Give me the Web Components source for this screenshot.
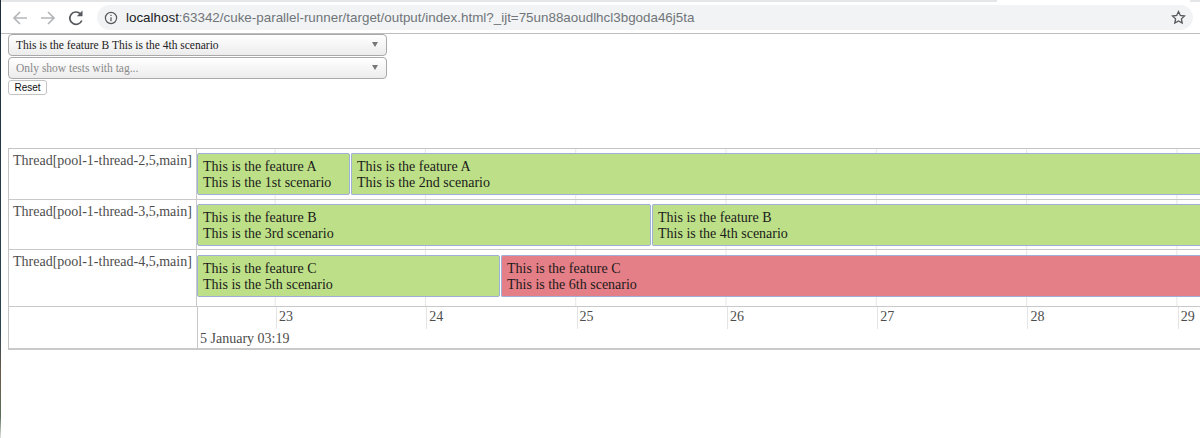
<!DOCTYPE html>
<html lang="en">
<head>
<meta charset="UTF-8">
<title>Cucumber timeline</title>
<style>
    html, body { margin: 0; padding: 0; background: #fff; }
    body { height: 438px; overflow: hidden; font-family: "Liberation Serif", serif; }
    /* desktop showing at the window's left edge */
    body::before { content: ""; position: fixed; left: 0; top: 0; bottom: 0; width: 1px; background: linear-gradient(#1e2c3a, #2b4555 75%, #6b5a4a 85%, #5a6f5a 95%, #dfe3df); }
</style>
</head>
<body>

<browser-bar url-host="localhost" url-rest=":63342/cuke-parallel-runner/target/output/index.html?_ijt=75un88aoudlhcl3bgoda46j5ta"></browser-bar>

<filter-panel>
    <filter-select>This is the feature B This is the 4th scenario</filter-select>
    <filter-select placeholder>Only show tests with tag...</filter-select>
    <reset-button>Reset</reset-button>
</filter-panel>

<time-line>
    <time-row label="Thread[pool-1-thread-2,5,main]" style="--row-h:50px;--item-top:4px">
        <time-item width="153" feature="This is the feature A" scenario="This is the 1st scenario"></time-item>
        <time-item feature="This is the feature A" scenario="This is the 2nd scenario"></time-item>
    </time-row>
    <time-row label="Thread[pool-1-thread-3,5,main]" style="--row-h:49px;--item-top:4px">
        <time-item width="454" feature="This is the feature B" scenario="This is the 3rd scenario"></time-item>
        <time-item feature="This is the feature B" scenario="This is the 4th scenario"></time-item>
    </time-row>
    <time-row label="Thread[pool-1-thread-4,5,main]" style="--row-h:56px;--item-top:5px">
        <time-item width="303" feature="This is the feature C" scenario="This is the 5th scenario"></time-item>
        <time-item failed feature="This is the feature C" scenario="This is the 6th scenario"></time-item>
    </time-row>
</time-line>

<script>

    class BrowserBar extends HTMLElement {
        constructor(){
            super()
            this.attachShadow({mode:"open"})
            this.shadowRoot.innerHTML = `
            <style>
                :host { display: flex; align-items: center; box-sizing: border-box; height: 34px; padding: 4px 7px 2px 0; background: linear-gradient(90deg, #e4e6e8 997px, #fff 997px, #fff 1190px, #e4e6e8 1190px) 0 0 / 100% 2px no-repeat #fff; border-bottom: 1px solid #bdbdbd; font-family: "Liberation Sans", sans-serif; }
                .nav { display: flex; align-items: center; gap: 8px; padding-left: 10px; width: 97px; flex: none; box-sizing: border-box; }
                .reload { margin-left: 1px; }
                svg { display: block; flex: none; }
                .omni { flex: 1; height: 25px; display: flex; align-items: center; background: #f1f3f4; border-radius: 13px; padding: 0 7px 0 7px; font-size: 13.4px; color: #70757a; white-space: nowrap; }
                .omni b { font-weight: normal; color: #202124; }
                .url { flex: 1; margin-left: 8px; }
            </style>
            <div class="nav">
                <svg width="20" height="20" viewBox="0 0 20 20" fill="none" stroke="#b4b6b9" stroke-width="1.7"><path d="M17 10H4M10 4l-6 6 6 6"/></svg>
                <svg width="20" height="20" viewBox="0 0 20 20" fill="none" stroke="#b4b6b9" stroke-width="1.7"><path d="M3 10h13M10 4l6 6-6 6"/></svg>
                <svg class="reload" width="18" height="18" viewBox="0 0 18 18" fill="none" stroke="#55585c" stroke-width="1.7"><path d="M14.8 11.5A6.2 6.2 0 1 1 13.4 4.8"/><path d="M15.5 1.5v5.7H9.8z" fill="#55585c" stroke="none"/></svg>
            </div>
            <div class="omni">
                <svg width="14" height="14" viewBox="0 0 14 14" fill="none" stroke="#55585c" stroke-width="1.2"><circle cx="7" cy="7" r="5.6"/><path d="M7 6.2v4M7 3.7v1.3"/></svg>
                <span class="url"><b>${this.getAttribute("url-host")}</b>${this.getAttribute("url-rest")}</span>
                <svg width="15" height="15" viewBox="0 0 15 15" fill="none" stroke="#55585c" stroke-width="1.3"><path d="M7.5 1.6l1.8 3.9 4.2.5-3.1 2.9.8 4.2-3.7-2.1-3.7 2.1.8-4.2L1.5 6l4.2-.5z"/></svg>
            </div>
            `
        }
    }

    class FilterPanel extends HTMLElement {
        constructor(){
            super()
            this.attachShadow({mode:"open"})
            this.shadowRoot.innerHTML = `
            <style>
                :host { display: flex; flex-direction: column; align-items: flex-start; gap: 1px; padding: 0 0 0 8px; height: 114px; box-sizing: border-box; }
            </style>
            <slot></slot>
            `
        }
    }

    class FilterSelect extends HTMLElement {
        constructor(){
            super()
            this.attachShadow({mode:"open"})
            this.shadowRoot.innerHTML = `
            <style>
                :host { display: flex; align-items: center; justify-content: space-between; box-sizing: border-box; width: 379px; height: 22px; padding: 0 8px 1px 7px; border: 1px solid #a9a9a9; border-radius: 4px; background: linear-gradient(#ffffff, #ececec); font: 11.5px "Liberation Serif", serif; color: #222; }
                :host([placeholder]) { color: #8a8a8a; }
                i { width: 0; height: 0; border: 3.5px solid transparent; border-top: 5px solid #777; border-bottom: 0; }
            </style>
            <span><slot></slot></span><i></i>
            `
        }
    }

    class ResetButton extends HTMLElement {
        constructor(){
            super()
            this.attachShadow({mode:"open"})
            this.shadowRoot.innerHTML = `
            <style>
                :host { display: flex; align-items: center; justify-content: center; box-sizing: border-box; width: 39px; height: 15px; padding-bottom: 1px; border: 1px solid #c4c4c4; border-radius: 3px; background: #fff; font: 10px "Liberation Sans", sans-serif; color: #111; }
            </style>
            <slot></slot>
            `
        }
    }

    class TimeLine extends HTMLElement {
        constructor(){
            super()
            this.attachShadow({mode:"open"})
            const days = [23, 24, 25, 26, 27, 28, 29]
            this.shadowRoot.innerHTML = `
            <style>
                :host { display: block; box-sizing: border-box; margin-left: 8px; width: 1192px; overflow: hidden; border-top: 1px solid #c4c4c4; border-left: 1px solid #c4c4c4; border-bottom: 2px solid #c9c9c9; font: 14px "Liberation Serif", serif; color: #4d4d4d; }
                .axis { display: flex; height: 42px; box-sizing: border-box; border-top: 1px solid #c9c9c9; }
                .blank { width: 188px; flex: none; border-right: 1px solid #c9c9c9; }
                .scale { flex: 1; min-width: 0; overflow: hidden; }
                .days { display: flex; padding-left: 78px; height: 22px; }
                .days span { flex: 0 0 150.3px; box-sizing: border-box; padding: 2px 0 0 2px; border-left: 1px solid #e4e4e4; }
                .month { padding: 2px 0 0 2px; }
            </style>
            <slot></slot>
            <div class="axis">
                <div class="blank"></div>
                <div class="scale">
                    <div class="days">${days.map(d => `<span>${d}</span>`).join("")}</div>
                    <div class="month">5 January 03:19</div>
                </div>
            </div>
            `
        }
    }

    class TimeRow extends HTMLElement {
        constructor(){
            super()
            this.attachShadow({mode:"open"})
            this.shadowRoot.innerHTML = `
            <style>
                :host { display: flex; height: var(--row-h); border-bottom: 1px solid #c9c9c9; }
                :host(:last-of-type) { border-bottom: 0; }
                .label { width: 188px; flex: none; box-sizing: border-box; padding: 4px 0 0 4px; border-right: 1px solid #c9c9c9; white-space: nowrap; }
                .track { flex: 1; min-width: 0; display: flex; gap: 1px; overflow: hidden; padding-top: var(--item-top); box-sizing: border-box; background: linear-gradient(90deg, transparent 78px, #e6e6e6 78px, #e6e6e6 79px, transparent 79px) 0 0 / 150.3px 100% repeat-x; }
            </style>
            <div class="label">${this.getAttribute("label")}</div>
            <div class="track"><slot></slot></div>
            `
        }
    }

    class TimeItem extends HTMLElement {
        constructor(){
            super()
            this.attachShadow({mode:"open"})
            this.shadowRoot.innerHTML = `
            <style>
                :host { display: block; box-sizing: border-box; flex: 1 1 0; min-width: 0; height: 42px; overflow: hidden; padding: 5px 0 0 5px; border: 1px solid #9fb0d6; border-right-width: 0; border-radius: 2px 0 0 2px; background: #bddf87; color: #1a1a1a; font-size: 14px; line-height: 16px; white-space: nowrap; }
                :host([width]) { flex: none; border-right-width: 1px; border-radius: 2px; }
                :host([failed]) { background: #e57f87; }
            </style>
            <div>${this.getAttribute("feature")}</div>
            <div>${this.getAttribute("scenario")}</div>
            `
            if (this.hasAttribute("width")) this.style.width = this.getAttribute("width") + "px"
        }
    }

    customElements.define("browser-bar", BrowserBar)
    customElements.define("filter-panel", FilterPanel)
    customElements.define("filter-select", FilterSelect)
    customElements.define("reset-button", ResetButton)
    customElements.define("time-line", TimeLine)
    customElements.define("time-row", TimeRow)
    customElements.define("time-item", TimeItem)

</script>
</body>
</html>
